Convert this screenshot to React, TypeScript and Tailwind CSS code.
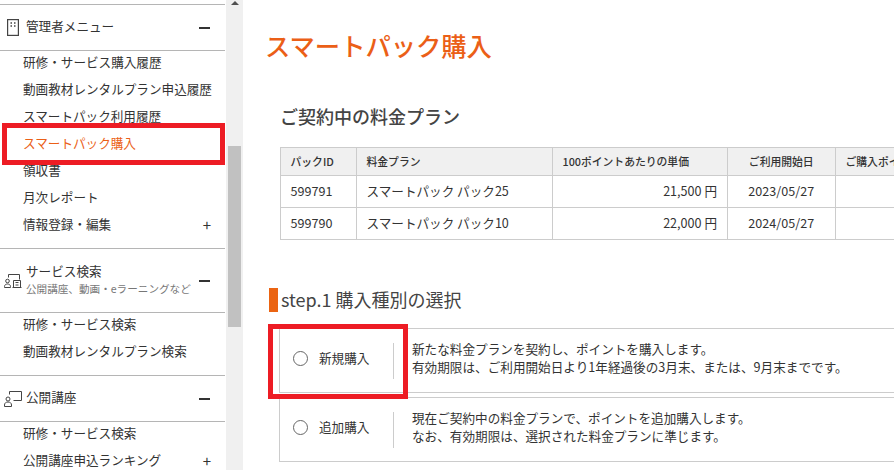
import type { ReactNode } from 'react'

function Building() {
  return (
    <svg width="12" height="17" viewBox="0 0 12 17" fill="none" stroke="#444" strokeWidth="1.2">
      <rect x="0.6" y="0.6" width="10.800" height="15.800" />
      <path d="M3.500 4h1.500M7 4h1.500M3.500 7h1.500M7 7h1.500" strokeWidth="1.500" />
    </svg>
  )
}

function PersonScreen() {
  return (
    <svg width="18" height="16" viewBox="0 0 18 16" fill="none" stroke="#444" strokeWidth="1">
      <path d="M5.500 3.500V0.500h12v9h-8" />
      <circle cx="4" cy="8" r="2" />
      <path d="M0.500 15.500v-1.500c0-2 1.500-3 3.500-3s3.500 1 3.500 3v1.500z" />
    </svg>
  )
}

function PersonBuilding() {
  return (
    <svg width="18" height="14" viewBox="0 0 18 14" fill="none" stroke="#444" strokeWidth="1">
      <path d="M4.500 3.500V0.500h11v5" />
      <circle cx="3.500" cy="7" r="1.800" />
      <path d="M0.500 13.500v-1c0-1.500 1.300-2.500 3-2.500s3 1 3 2.500v1z" />
      <path d="M9.500 13.500v-7h7v7M8.500 13.500h9M11.500 8.500h3M11.500 11h3" />
    </svg>
  )
}

function SideItem({ label, active, plus }: { label: string; active?: boolean; plus?: boolean }) {
  return (
    <li className={`flex h-[27px] items-center justify-between whitespace-nowrap pb-[2px] pl-[23px] pr-[14px] text-[12.6px] ${active ? 'text-[#eb5f17]' : 'text-[#333]'}`}>
      <span>{label}</span>
      {plus && <span className="text-[15px] leading-none text-[#333]">+</span>}
    </li>
  )
}

function SideHead({ icon, title, sub, tall }: { icon: ReactNode; title: string; sub?: string; tall?: boolean }) {
  return (
    <div className={`flex items-center border-y border-[#b5b5b5] pl-[4px] pr-[15px] ${tall ? 'h-[65px]' : 'h-[47px]'}`}>
      <span className="flex w-[22px] shrink-0 justify-start">{icon}</span>
      <div className={`min-w-0 flex-1 ${tall ? 'pb-[1px]' : 'pb-[3px]'}`}>
        <div className="text-[12.6px] leading-[18px] text-[#333]">{title}</div>
        {sub && <div className="whitespace-nowrap text-[10.6px] leading-[18px] text-[#777]">{sub}</div>}
      </div>
      <span className="h-[2px] w-[11px] shrink-0 bg-[#333]" />
    </div>
  )
}

function Scrollbar() {
  return (
    <div className="flex w-[17px] shrink-0 flex-col items-center bg-[#f0f0f0]">
      <div className="mt-[1px] h-0 w-0 border-x-[4px] border-b-[4px] border-x-transparent border-b-[#505050]" />
      <div className="mt-[141px] h-[181px] w-[13px] bg-[#c1c1c1]" />
    </div>
  )
}

function Option({ label, lines }: { label: string; lines: string[] }) {
  return (
    <div className="flex h-[65px] w-[640px] items-center border border-r-0 border-[#ccc]">
      <div className="flex h-[36px] w-[114px] shrink-0 items-center border-r border-[#ccc] pb-[4px] pl-[13px]">
        <span className="h-[15px] w-[15px] rounded-full border border-[#666]" />
        <span className="ml-[11px] text-[12.6px] text-[#333]">{label}</span>
      </div>
      <div className="pb-[5px] pl-[18px] text-[12.62px] leading-[18px] text-[#333]">
        {lines.map((l) => (
          <div key={l} className="whitespace-nowrap">{l}</div>
        ))}
      </div>
    </div>
  )
}

const TH = 'border border-[#ccc] bg-[#f0f0f0] pl-[9.500px] pr-[10px] text-[10.8px] font-medium text-[#333]'
const TD = 'border border-[#ccc] pl-[9.500px] pr-[10px] text-[12.6px] text-[#333]'

export default function App() {
  return (
    <div className="relative flex h-[470px] w-[894px] overflow-hidden bg-white font-['Noto_Sans_CJK_JP',sans-serif]">
      <aside className="w-[226px] shrink-0 pt-[4px]">
        <div className="w-[225px]">
          <SideHead icon={<span className="ml-[3px]"><Building /></span>} title="管理者メニュー" />
          <ul className="-mt-[1px] pb-[9px]">
            <SideItem label="研修・サービス購入履歴" />
            <SideItem label="動画教材レンタルプラン申込履歴" />
            <SideItem label="スマートパック利用履歴" />
            <SideItem label="スマートパック購入" active />
            <SideItem label="領収書" />
            <SideItem label="月次レポート" />
            <SideItem label="情報登録・編集" plus />
          </ul>
          <SideHead icon={<PersonBuilding />} title="サービス検索" sub="公開講座、動画・eラーニングなど" tall />
          <ul className="-mt-[1px] pb-[9px]">
            <SideItem label="研修・サービス検索" />
            <SideItem label="動画教材レンタルプラン検索" />
          </ul>
          <SideHead icon={<PersonScreen />} title="公開講座" />
          <ul className="-mt-[1px]">
            <SideItem label="研修・サービス検索" />
            <SideItem label="公開講座申込ランキング" plus />
          </ul>
        </div>
      </aside>
      <Scrollbar />
      <main className="min-w-0 flex-1 overflow-hidden pl-[22px] pt-[27px]">
        <h1 className="text-[25.300px] font-medium leading-[36px] text-[#eb5f17]">スマートパック購入</h1>
        <h2 className="ml-[15px] mt-[40px] text-[18px] font-medium leading-[26px] text-[#444]">ご契約中の料金プラン</h2>
        <table className="ml-[15px] mt-[18px] w-[680px] table-fixed border-collapse">
          <colgroup>
            <col className="w-[76px]" />
            <col className="w-[196px]" />
            <col className="w-[175px]" />
            <col className="w-[108px]" />
            <col className="w-[125px]" />
          </colgroup>
          <thead>
            <tr className="h-[28px]">
              <th className={`${TH} text-left`}>パックID</th>
              <th className={`${TH} text-left`}>料金プラン</th>
              <th className={`${TH} text-left`}>100ポイントあたりの単価</th>
              <th className={`${TH} text-center`}>ご利用開始日</th>
              <th className={`${TH} whitespace-nowrap text-left`}>ご購入ポイント</th>
            </tr>
          </thead>
          <tbody>
            <tr className="h-[32px]">
              <td className={TD}>599791</td>
              <td className={TD}>スマートパック パック25</td>
              <td className={`${TD} text-right`}>21,500 円</td>
              <td className={`${TD} text-center`}>2023/05/27</td>
              <td className={TD}></td>
            </tr>
            <tr className="h-[32px]">
              <td className={TD}>599790</td>
              <td className={TD}>スマートパック パック10</td>
              <td className={`${TD} text-right`}>22,000 円</td>
              <td className={`${TD} text-center`}>2024/05/27</td>
              <td className={TD}></td>
            </tr>
          </tbody>
        </table>
        <h2 className="ml-[4px] mt-[48px] flex h-[24px] items-center border-l-[9px] border-[#eb6412] pb-[2px] pl-[3px] text-[18px] font-normal text-[#444]">
          step.1 購入種別の選択
        </h2>
        <div className="ml-[14px] mt-[16px] flex flex-col gap-[4px]">
          <Option
            label="新規購入"
            lines={['新たな料金プランを契約し、ポイントを購入します。', '有効期限は、ご利用開始日より1年経過後の3月末、または、9月末までです。']}
          />
          <Option
            label="追加購入"
            lines={['現在ご契約中の料金プランで、ポイントを追加購入します。', 'なお、有効期限は、選択された料金プランに準じます。']}
          />
        </div>
      </main>
      {/* red annotation boxes */}
      <div className="pointer-events-none absolute left-[2px] top-[123px] h-[42px] w-[223px] border-[5px] border-[#ed1c24]" />
      <div className="pointer-events-none absolute left-[268px] top-[324px] h-[75px] w-[140px] border-[5px] border-[#ed1c24]" />
    </div>
  )
}
